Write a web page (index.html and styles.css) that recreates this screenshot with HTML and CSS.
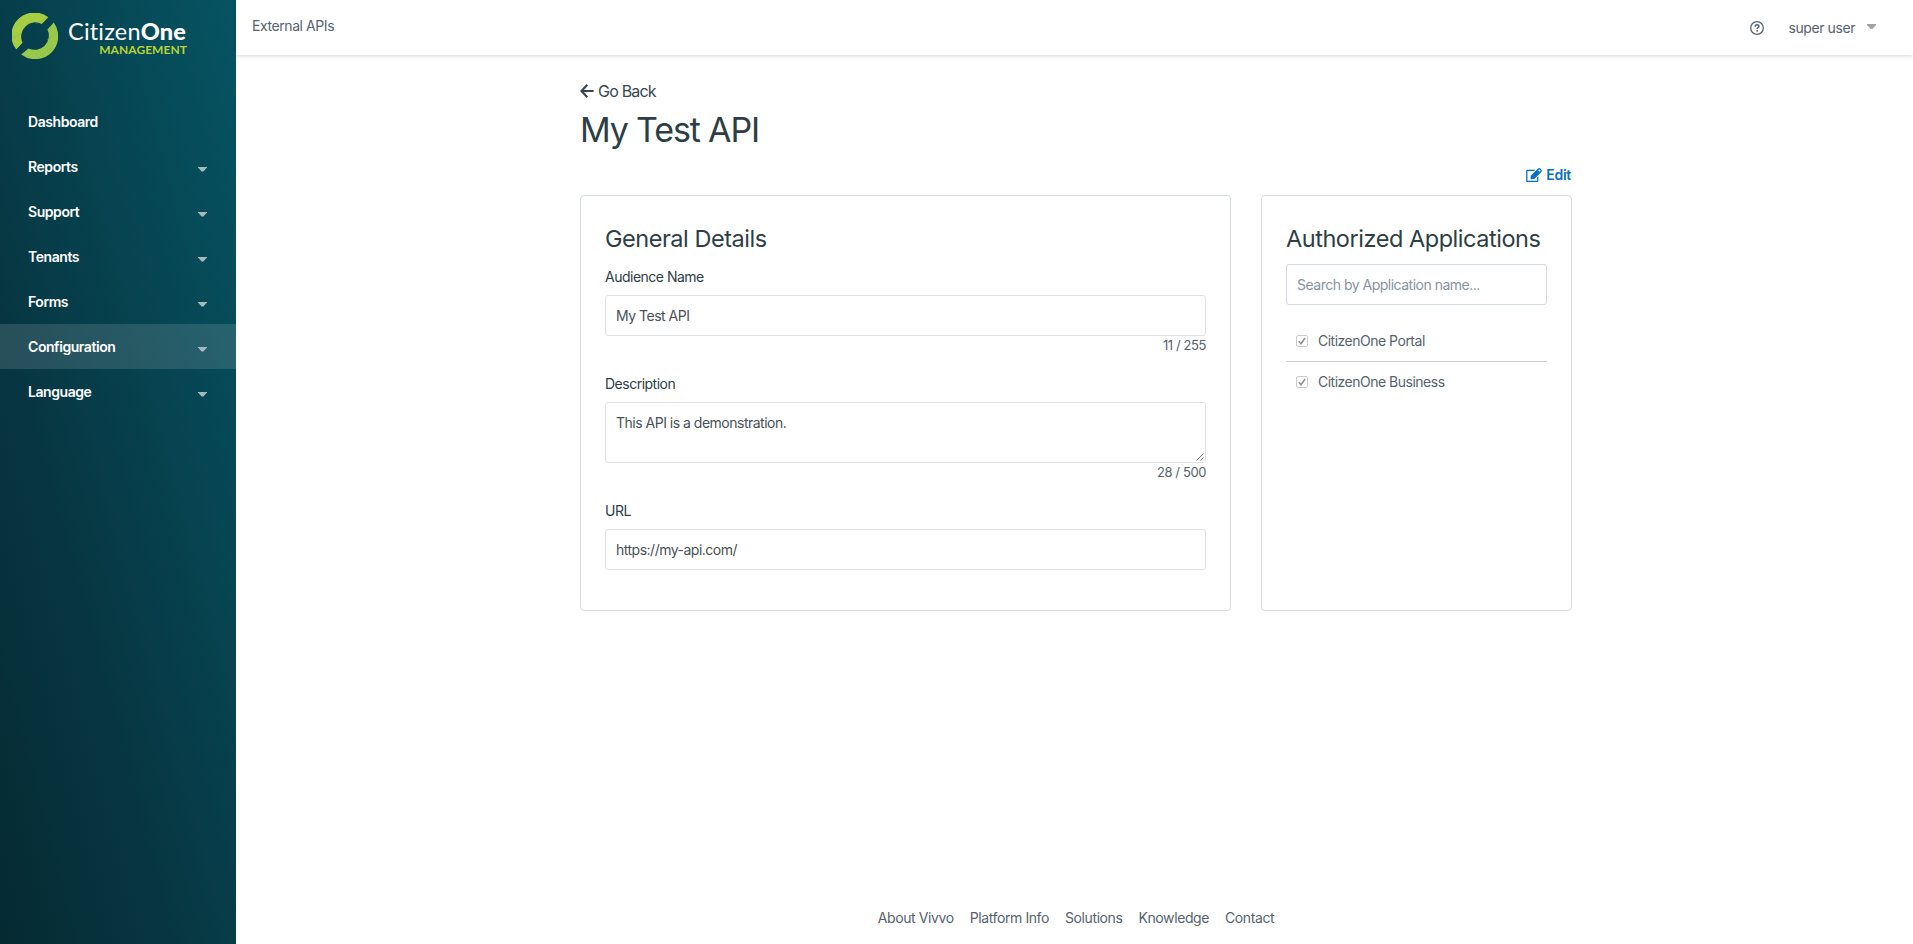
FILE: index.html
```html
<!DOCTYPE html>
<html lang="en">
<head>
<meta charset="utf-8">
<title>External APIs</title>
<link rel="stylesheet" href="styles.css">
</head>
<body>
<div class="app">
  <aside class="sidebar">
    <div class="brand">
      <svg class="brand-mark" width="46" height="46" viewBox="0 0 46 46">
        <path fill="#a6ce44" d="M36.3 4.2A23 23 0 0 0 4.2 36.6L10.6 29.8A14.2 14.2 0 0 1 29.8 10.9Z"/>
        <path fill="#98c94c" d="M41.8 9.6A23 23 0 0 1 9.2 41.4L16.4 35.4A14.2 14.2 0 0 0 35.4 16.4Z"/>
        <path stroke="#7fa838" stroke-width=".4" stroke-dasharray="2 1" d="M1 25L9 20M24 11L36 4M25 45L42 33M35 27L45 20"/>
      </svg>
      <div class="brand-text">
        <div class="brand-name">Citizen<b>One</b></div>
        <div class="brand-sub">MANAGEMENT</div>
      </div>
    </div>
    <nav class="nav">
      <a class="nav-item">Dashboard</a>
      <a class="nav-item">Reports<i class="caret"></i></a>
      <a class="nav-item">Support<i class="caret"></i></a>
      <a class="nav-item">Tenants<i class="caret"></i></a>
      <a class="nav-item">Forms<i class="caret"></i></a>
      <a class="nav-item active">Configuration<i class="caret"></i></a>
      <a class="nav-item">Language<i class="caret"></i></a>
    </nav>
  </aside>
  <div class="page">
    <header class="topbar">
      <span class="crumb">External APIs</span>
      <div class="account">
        <svg width="14" height="14" viewBox="0 0 14 14" fill="none" stroke="#56636e" stroke-width="1.3">
          <circle cx="7" cy="7" r="6.3"/>
          <path stroke-width="1.5" d="M5.1 5.6C5.2 4.3 6 3.8 7 3.8C8.1 3.8 8.9 4.5 8.9 5.4C8.9 6.7 7.1 6.7 7.1 8.1"/>
          <circle cx="7.1" cy="9.9" r=".85" fill="#56636e" stroke="none"/>
        </svg>
        <span class="user">super user</span>
        <i class="caret gray"></i>
      </div>
    </header>
    <main class="content">
      <a class="back">
        <svg width="14" height="14" viewBox="0 0 14 14" fill="none" stroke="#37474f" stroke-width="2.2"><path d="M13.6 7H1.8M7.3 .8L1.400 7L7.3 13.2"/></svg>
        <span>Go Back</span>
      </a>
      <h1 class="title">My Test API</h1>
      <div class="actions">
        <a class="edit">
          <svg width="16" height="14" viewBox="0 0 576 512" fill="#066fc5"><path d="M402.300 344.900l32-32c5-5 13.700-1.500 13.700 5.700V464c0 26.500-21.500 48-48 48H48c-26.500 0-48-21.500-48-48V112c0-26.500 21.500-48 48-48h273.500c7.100 0 10.700 8.600 5.700 13.700l-32 32c-1.500 1.500-3.500 2.300-5.700 2.300H48v352h352V350.500c0-2.100.8-4.100 2.300-5.600zm156.600-201.800L296.300 405.700l-90.400 10c-26.200 2.900-48.500-19.200-45.600-45.600l10-90.400L432.900 17.100c22.900-22.900 59.900-22.900 82.700 0l43.200 43.200c22.900 22.900 22.900 60 .1 82.800zM460.100 174L402 115.900 216.200 301.800l-7.300 65.300 65.300-7.300L460.100 174zm64.800-79.700l-43.200-43.200c-4.100-4.100-10.800-4.100-14.800 0L436 82l58.100 58.100 30.900-30.900c4-4.200 4-10.800-.1-14.900z"/><path d="M190 390l15-110L395 95l85 85-195 195z"/></svg>
          <span>Edit</span>
        </a>
      </div>
      <div class="cards">
        <section class="card">
          <h2 class="card-title">General Details</h2>
          <label class="label first">Audience Name</label>
          <div class="field">My Test API</div>
          <div class="count">11 / 255</div>
          <label class="label">Description</label>
          <div class="field area">This API is a demonstration.
            <svg class="grip" width="8" height="8" viewBox="0 0 8 8" stroke="#555" stroke-width=".8"><path d="M.5 7.500L7.500 .5M4.500 7.500L7.500 4.500"/></svg>
          </div>
          <div class="count">28 / 500</div>
          <label class="label">URL</label>
          <div class="field">https://my-api.com/</div>
        </section>
        <section class="card">
          <h2 class="card-title apps">Authorized Applications</h2>
          <div class="field search">Search by Application name...</div>
          <ul class="list">
            <li class="row"><span class="check"><svg width="8" height="8" viewBox="0 0 8 8" fill="none" stroke="#8e8e8e" stroke-width="1.6"><path d="M.8 4.300L3 6.700L7 1"/></svg></span><span>CitizenOne Portal</span></li>
            <li class="row"><span class="check"><svg width="8" height="8" viewBox="0 0 8 8" fill="none" stroke="#8e8e8e" stroke-width="1.6"><path d="M.8 4.300L3 6.700L7 1"/></svg></span><span>CitizenOne Business</span></li>
          </ul>
        </section>
      </div>
    </main>
    <footer class="footer">
      <a>About Vivvo</a><a>Platform Info</a><a>Solutions</a><a>Knowledge</a><a>Contact</a>
    </footer>
  </div>
</div>
</body>
</html>
```
FILE: styles.css
```css
* { box-sizing: border-box; }
body { margin: 0; font: 14px/20px Inter, "Liberation Sans", sans-serif; letter-spacing: -.5px; color: #56636e; background: #fff; }
.app { display: flex; height: 944px; overflow: hidden; }
.sidebar { width: 236px; flex: none; background: linear-gradient(75deg, #052a32 0%, #073642 35%, #065463 100%); }
.brand { display: flex; height: 99px; padding: 13px 0 0 12px; gap: 10px; }
.brand-text { width: 119px; padding-top: 4px; font-family: Lato, sans-serif; }
.brand-name { color: #fff; font-size: 23.500px; line-height: 28px; letter-spacing: .2px; white-space: nowrap; }
.brand-name b { font-weight: 900; }
.brand-sub { color: #b8d335; font-size: 12px; font-weight: 700; line-height: 14px; letter-spacing: .05px; text-align: right; margin-top: -2px; }
.nav-item { display: flex; align-items: center; justify-content: space-between; height: 45px; padding: 0 29px 0 28px; color: #fff; font-weight: 600; letter-spacing: -.44px; }
.nav-item.active { background: rgba(255, 255, 255, .13); }
.caret { width: 9px; height: 5px; margin-top: 5px; background: #a3b9be; clip-path: polygon(0 0, 100% 0, 100% 20%, 60% 100%, 40% 100%, 0 20%); }
.caret.gray { background: #9da2a6; margin: 0 0 2px 12px; }
.page { flex: 1; display: flex; flex-direction: column; }
.topbar { flex: none; height: 55px; display: flex; align-items: center; justify-content: space-between; padding: 0 37px 0 16px; box-shadow: 0 1px 4px rgba(0, 0, 0, .16); letter-spacing: -.42px; }
.crumb { margin-top: -3px; }
.account { display: flex; align-items: center; }
.user { margin-left: 24px; }
.content { width: 992px; margin-left: 344px; padding-top: 26px; flex: 1; }
.back { display: flex; align-items: center; gap: 4px; font-size: 16px; letter-spacing: -.8px; color: #37474f; }
.title { margin: 9px 0 0; font-size: 34px; line-height: 40px; font-weight: 400; letter-spacing: -1.15px; color: #2d3e46; }
.actions { display: flex; justify-content: flex-end; margin: 15px 0 10px; padding-right: 1px; }
.edit { display: flex; align-items: center; gap: 4px; color: #066fc5; font-weight: 600; letter-spacing: -.25px; }
.cards { display: grid; grid-template-columns: 651px 311px; gap: 30px; height: 416px; }
.card { border: 1px solid #d5dce2; border-radius: 4px; padding: 29px 24px; }
.card-title { margin: 0; font-size: 23.500px; line-height: 28px; font-weight: 400; letter-spacing: -.46px; color: #2d3e46; white-space: nowrap; }
.label { display: block; color: #2d3e46; margin: 18px 0 8px; }
.label.first { margin-top: 14px; }
.field { position: relative; height: 41px; padding: 10px; border: 1px solid #dfe2e5; border-radius: 3px; color: #495057; }
.area { height: 61px; }
.grip { position: absolute; right: 1px; bottom: 1px; }
.count { height: 20px; line-height: 19px; text-align: right; font-size: 13px; letter-spacing: -.4px; }
.search { margin-top: 11px; border-color: #d3dbe2; color: #8794a1; }
.list { list-style: none; margin: 15px 0 0; padding: 0; }
.row { display: flex; align-items: center; height: 41px; padding: 0 10px; gap: 10px; }
.row + .row { border-top: 1px solid #cbcdcf; }
.check { width: 12px; height: 12px; border: 1px solid #ccc; border-radius: 2px; display: grid; place-items: center; }
.footer { display: flex; gap: 16px; justify-content: center; height: 36px; padding-left: 3px; letter-spacing: -.4px; }
```
